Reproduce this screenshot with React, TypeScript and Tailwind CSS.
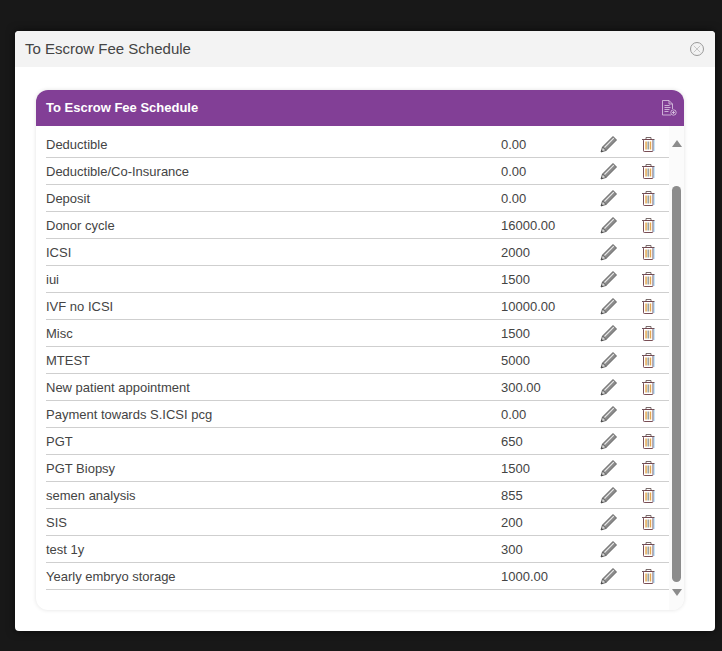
import { X } from 'lucide-react';

const rows = [
  { name: 'Deductible', amount: '0.00' },
  { name: 'Deductible/Co-Insurance', amount: '0.00' },
  { name: 'Deposit', amount: '0.00' },
  { name: 'Donor cycle', amount: '16000.00' },
  { name: 'ICSI', amount: '2000' },
  { name: 'iui', amount: '1500' },
  { name: 'IVF no ICSI', amount: '10000.00' },
  { name: 'Misc', amount: '1500' },
  { name: 'MTEST', amount: '5000' },
  { name: 'New patient appointment', amount: '300.00' },
  { name: 'Payment towards S.ICSI pcg', amount: '0.00' },
  { name: 'PGT', amount: '650' },
  { name: 'PGT Biopsy', amount: '1500' },
  { name: 'semen analysis', amount: '855' },
  { name: 'SIS', amount: '200' },
  { name: 'test 1y', amount: '300' },
  { name: 'Yearly embryo storage', amount: '1000.00' },
];

const PencilIcon = () => (
  <svg width="18" height="18" viewBox="0 0 18 18" fill="none">
    <path d="M13 1.500 16.500 5 6 15.500 2.500 12Z" fill="#8a8a8a" stroke="#5c5c5c" strokeWidth="0.900" />
    <path d="M4.500 12.500 13.800 3.200" stroke="#e8e8e8" strokeWidth="1.100" />
    <path d="M2.500 12 1 17l5-1.500Z" fill="#d8d8d8" stroke="#5c5c5c" strokeWidth="0.900" strokeLinejoin="round" />
    <path d="M1 17l.6-2.200 1.600 1.600Z" fill="#444" />
  </svg>
);

const TrashIcon = () => (
  <svg width="13" height="15" viewBox="0 0 13 15" fill="none">
    <path d="M4 2V.5h5V2" stroke="#6a5a5a" strokeWidth="0.900" />
    <path d="M0 2.500h12.500" stroke="#5a4248" strokeWidth="0.900" />
    <rect x="1.500" y="2.500" width="9.500" height="12" rx="0.800" fill="#fff" stroke="#6a3a42" strokeWidth="0.900" />
    <rect x="3.300" y="4.500" width="1.500" height="8" fill="#e5a850" />
    <rect x="5.500" y="4.500" width="1.400" height="8" fill="#8f9a9a" />
    <rect x="7.700" y="4.500" width="1.500" height="8" fill="#e5a850" />
    <path d="M12 3v11" stroke="#7cc4f4" strokeWidth="0.800" />
  </svg>
);

const AddDocIcon = () => (
  <svg width="15" height="16" viewBox="0 0 15 16" fill="none" stroke="#dfcde6" strokeWidth="0.800">
    <path d="M9 15H.5V.5h6.500L10.500 4v5" />
    <path d="M7 .5V4h3.500" />
    <path d="M2.500 5.500h5M2.500 7.500h6M2.500 9.500h5M2.500 11.500h4" />
    <circle cx="11.500" cy="12.500" r="2.700" />
    <path d="M11.500 11v3M10 12.500h3" />
  </svg>
);

export default function App() {
  return (
    <div className="h-[651px] overflow-hidden bg-[#181818] pt-[31px] pl-[15px] font-['Liberation_Sans',Arial,sans-serif]">
      <div className="h-[600px] w-[700px] overflow-hidden rounded bg-white shadow-[0_0_8px_rgba(0,0,0,0.6)]">
        {/* Modal title */}
        <div className="flex h-9 items-center justify-between bg-[#f3f3f3] pl-2.5 pr-[11px]">
          <span className="text-[15px] text-[#444]">To Escrow Fee Schedule</span>
          <span className="flex h-[14px] w-[14px] items-center justify-center rounded-full border border-[#999] text-[#999]">
            <X size={12} strokeWidth={1} />
          </span>
        </div>

        <div className="px-[21px] pt-[23px]">
          <div className="h-[520px] w-[648px] overflow-hidden rounded-[12px] bg-white shadow-[0_0_4px_rgba(0,0,0,0.12)]">
            {/* Card header */}
            <div className="flex h-9 items-center justify-between bg-[#823f96] pl-2.5 pr-[7px]">
              <span className="text-[13px] font-bold text-white">To Escrow Fee Schedule</span>
              <AddDocIcon />
            </div>

            <div className="flex">
              <div className="w-[633px] pl-2.5 pt-[5px]">
                {rows.map((row) => (
                  <div key={row.name} className="flex h-[27px] items-center border-b border-[#cfcfcf] text-[13px] text-[#444]">
                    <span className="w-[455px] pt-0.5">{row.name}</span>
                    <span className="w-[99px] pt-0.5">{row.amount}</span>
                    <span className="flex w-[42px] justify-start"><PencilIcon /></span>
                    <span className="flex w-[20px]"><TrashIcon /></span>
                  </div>
                ))}
              </div>

              {/* Scrollbar */}
              <div className="flex h-[484px] w-[15px] flex-col items-center bg-[#fbfbfb]">
                <div className="mt-[14px] h-0 w-0 border-x-[5px] border-b-[7px] border-x-transparent border-b-[#8c8c8c]" />
                <div className="mt-[39px] h-[396px] w-[9px] rounded-[5px] bg-[#8c8c8c]" />
                <div className="mt-[7px] h-0 w-0 border-x-[5px] border-t-[7px] border-x-transparent border-t-[#8c8c8c]" />
              </div>
            </div>
          </div>
        </div>
      </div>
    </div>
  );
}
